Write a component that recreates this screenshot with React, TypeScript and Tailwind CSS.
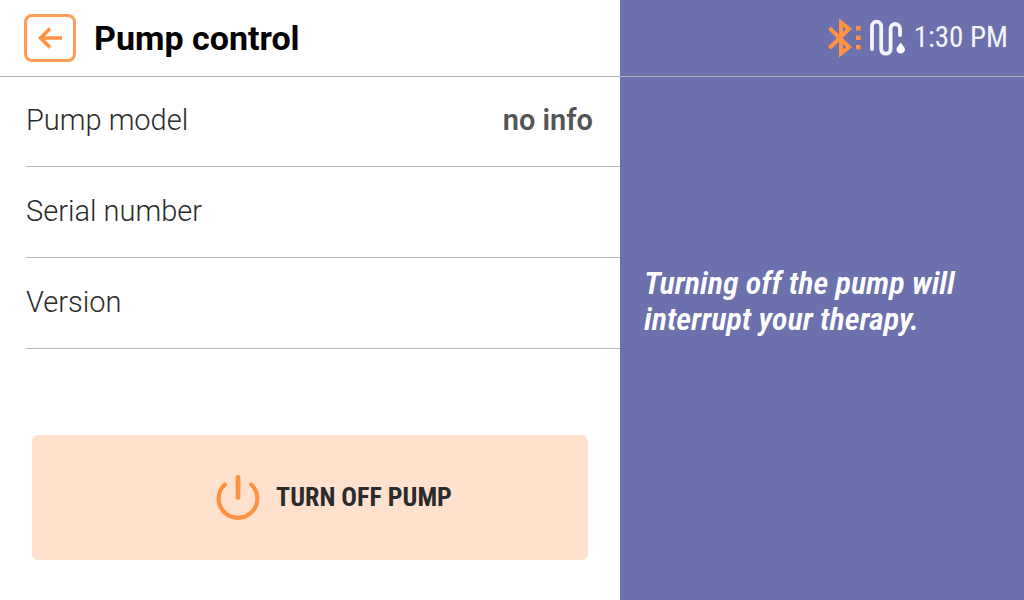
const settings = [
  { label: "Pump model", value: "no info" },
  { label: "Serial number", value: "" },
  { label: "Version", value: "" },
];

function BackIcon() {
  return (
    <svg width="24" height="24" viewBox="0 0 24 24" fill="none" stroke="currentColor" strokeWidth="3.6" aria-hidden="true">
      <path d="M24 12H3M12 2.500 2.600 12l9.400 9.500" />
    </svg>
  );
}

function BluetoothIcon() {
  return (
    <svg width="33" height="38" viewBox="0 0 33 38" fill="none" aria-hidden="true">
      <path d="M1.500 9 21 28l-8 6.500v-31L21 10 1.500 29" stroke="#ff9142" strokeWidth="4" />
      <path d="M28 7h4.600v4.600H28zM28 16.500h4.600v4.600H28zM28 26h4.600v4.600H28z" fill="#ff9142" />
    </svg>
  );
}

function TubingIcon() {
  return (
    <svg width="37" height="38" viewBox="0 0 37 38" fill="none" aria-hidden="true">
      <path
        d="M3 30V7.300a4.600 4.600 0 0 1 9.200 0V30a4.700 4.700 0 0 0 9.400 0V9.700a4.700 4.700 0 0 1 9.400 0V16"
        stroke="#f4f4f8"
        strokeWidth="3.800"
        strokeLinecap="round"
      />
      <path d="M31.700 23.500c2 3 4.200 4.600 4.200 6.900a4.200 4.200 0 0 1-8.400 0c0-2.300 2.200-3.900 4.200-6.900z" fill="#fff" />
    </svg>
  );
}

function PowerIcon() {
  return (
    <svg width="44" height="46" viewBox="0 0 44 46" fill="none" stroke="#ff9142" strokeLinecap="round" aria-hidden="true">
      <path d="M8.800 9.500a19.300 19.300 0 1 0 26.400 0" strokeWidth="4.200" />
      <path d="M22 2.500v20" strokeWidth="4.800" />
    </svg>
  );
}

export default function App() {
  return (
    <div className="flex min-h-screen flex-col bg-white font-['Roboto','Liberation_Sans',sans-serif]">
      <header className="grid grid-cols-[155fr_101fr] border-b border-[#b3b3b3]">
        <div className="flex h-19 items-center gap-[18px] pl-6">
          <button
            type="button"
            aria-label="Back"
            className="flex h-12 w-13 items-center justify-center rounded-lg border-3 border-[#ff9142]/90 text-[#ff9142]"
          >
            <BackIcon />
          </button>
          <h1 className="text-[34px] font-bold text-black">Pump control</h1>
        </div>
        <div className="flex items-center justify-end gap-2 bg-[#6c71ae] pr-4 font-['Roboto_Condensed','Roboto',sans-serif] text-[29px] text-[#f4f4f8]">
          <BluetoothIcon />
          <TubingIcon />
          <time dateTime="13:30">1:30 PM</time>
        </div>
      </header>

      <div className="grid flex-1 grid-cols-[155fr_101fr]">
        <main className="flex flex-col">
          <dl className="-mt-px pl-[26px] text-[29px]">
            {settings.map(({ label, value }) => (
              <div key={label} className="flex h-[91px] items-center justify-between border-b border-[#b8b8b8] pr-[27px]">
                <dt className="font-light text-[#2b2b2b]">{label}</dt>
                <dd className="font-semibold text-[#555]">{value}</dd>
              </div>
            ))}
          </dl>
          <div className="mt-auto px-8 pt-8 pb-10">
            <button
              type="button"
              className="flex h-[125px] w-full items-center justify-center gap-4 rounded-md bg-[#ffe1ce] pl-12 font-['Roboto_Condensed','Roboto',sans-serif] text-[26px] font-bold text-[#2b2b2b]"
            >
              <PowerIcon />
              TURN OFF PUMP
            </button>
          </div>
        </main>
        <aside className="flex items-center bg-[#6c71ae] px-6 pb-[75px] font-['Roboto_Condensed','Roboto',sans-serif] text-[32px] leading-9 font-semibold text-white italic">
          <p>Turning off the pump will interrupt your therapy.</p>
        </aside>
      </div>
    </div>
  );
}
